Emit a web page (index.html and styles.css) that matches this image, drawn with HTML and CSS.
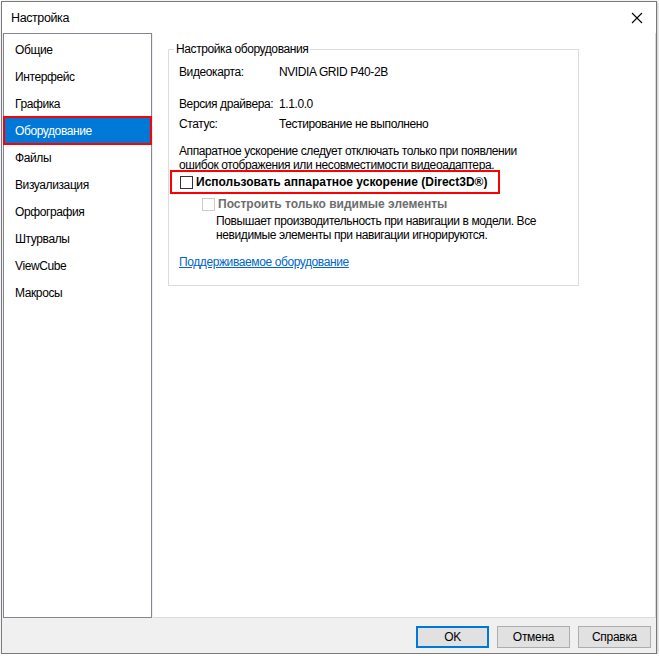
FILE: index.html
```html
<!DOCTYPE html>
<html lang="ru">
<head>
    <meta charset="UTF-8">
    <title>Настройка</title>
    <link rel="stylesheet" href="styles.css">
</head>
<body>
    <div class="window">
        <div class="titlebar">
            <span class="title">Настройка</span>
            <svg class="close" width="12" height="12" viewBox="0 0 12 12">
                <path d="M1 1 L11 11 M11 1 L1 11" stroke="#000" stroke-width="1.1" fill="none"/>
            </svg>
        </div>

        <div class="main">
            <ul class="nav">
                <li>Общие</li>
                <li>Интерфейс</li>
                <li>Графика</li>
                <li class="selected">Оборудование</li>
                <li>Файлы</li>
                <li>Визуализация</li>
                <li>Орфография</li>
                <li>Штурвалы</li>
                <li>ViewCube</li>
                <li>Макросы</li>
            </ul>

            <div class="page">
                <fieldset class="group">
                    <legend>Настройка оборудования</legend>
                    <div class="info">
                        <span>Видеокарта:</span><span>NVIDIA GRID P40-2B</span>
                    </div>
                    <div class="info driver">
                        <span>Версия драйвера:</span><span>1.1.0.0</span>
                    </div>
                    <div class="info status">
                        <span>Статус:</span><span>Тестирование не выполнено</span>
                    </div>
                    <p class="note">Аппаратное ускорение следует отключать только при появлении<br>ошибок отображения или несовместимости видеоадаптера.</p>
                    <div class="check highlight">
                        <span class="box"></span>
                        <span class="label">Использовать аппаратное ускорение (Direct3D®)</span>
                    </div>
                    <div class="check sub disabled">
                        <span class="box"></span>
                        <span class="label">Построить только видимые элементы</span>
                    </div>
                    <p class="desc">Повышает производительность при навигации в модели. Все<br>невидимые элементы при навигации игнорируются.</p>
                    <a class="link" href="#">Поддерживаемое оборудование</a>
                </fieldset>
            </div>
        </div>

        <div class="footer">
            <button class="btn default">OK</button>
            <button class="btn">Отмена</button>
            <button class="btn">Справка</button>
        </div>
    </div>
</body>
</html>
```

FILE: styles.css
```css
body {
    margin: 0;
    padding: 0;
    background: #fff;
    font-family: "Liberation Sans", Arial, sans-serif;
    font-size: 12px;
    letter-spacing: -0.4px;
    color: #000;
}
.window {
    margin: 1px 0 0 1px;
    width: 654px;
    height: 651px;
    border: 1px solid #7a7a7a;
    background: #f0f0f0;
    box-shadow: 1px 1px 3px rgba(0,0,0,0.25);
    display: flex;
    flex-direction: column;
}
.titlebar {
    height: 31px;
    background: #fff;
    display: flex;
    align-items: center;
    justify-content: space-between;
    padding: 0 13px 0 9px;
}
.title {
    font-size: 12.5px;
}
.main {
    display: flex;
    gap: 1px;
    height: 585px;
}
.nav {
    list-style: none;
    margin: 0 0 0 1px;
    padding: 2px 0 0;
    width: 149px;
    box-sizing: border-box;
    border: 1px solid #828790;
    background: #fff;
}
.nav li {
    height: 27px;
    line-height: 29px;
    padding-left: 11px;
}
.nav li.selected {
    background: #0078d7;
    color: #fff;
    outline: 2px solid #f00;
    outline-offset: -1px;
}
.page {
    flex: 1;
    background: #fff;
    border-right: 1px solid #dadada;
    border-bottom: 1px solid #dadada;
    padding: 9px 0 0 15px;
}
.group {
    margin: 0;
    width: 411px;
    box-sizing: border-box;
    border: 1px solid #dcdcdc;
    padding: 0 10px 15px 10px;
    line-height: 15px;
}
.group legend {
    margin-left: -5px;
    padding: 0 2px;
    line-height: 15px;
}
.info {
    display: grid;
    grid-template-columns: 100px auto;
    margin-top: 8px;
    white-space: nowrap;
}
.info.driver {
    margin-top: 17px;
}
.info.status {
    margin-top: 5px;
}
.note {
    margin: 12px 0 0;
    line-height: 14px;
    white-space: nowrap;
}
.check {
    display: inline-flex;
    align-items: center;
    gap: 3px;
}
.check .box {
    width: 11px;
    height: 11px;
    border: 1px solid #333;
    background: #fff;
}
.check .label {
    font-weight: bold;
    letter-spacing: 0;
}
.highlight {
    height: 20px;
    margin: 0 0 0 -7px;
    padding: 0 11px 0 8px;
    outline: 2px solid #f00;
    vertical-align: top;
}
.sub {
    display: flex;
    height: 16px;
    margin: 4px 0 0 23px;
}
.disabled .box {
    border-color: #cccccc;
}
.disabled .label {
    color: #6d6d6d;
}
.desc {
    margin: 2px 0 0 37px;
    line-height: 14px;
    white-space: nowrap;
}
.link {
    display: inline-block;
    margin-top: 13px;
    color: #0066cc;
    line-height: 14px;
}
.footer {
    flex: 1;
    display: flex;
    justify-content: flex-end;
    align-items: flex-start;
    gap: 8px;
    padding: 8px 5px 0 0;
}
.btn {
    width: 73px;
    height: 22px;
    padding: 0;
    font-family: "Liberation Sans", Arial, sans-serif;
    font-size: 12px;
    letter-spacing: -0.3px;
    color: #000;
    background: #e1e1e1;
    border: 1px solid #adadad;
}
.btn.default {
    border: 2px solid #0078d7;
}
```
